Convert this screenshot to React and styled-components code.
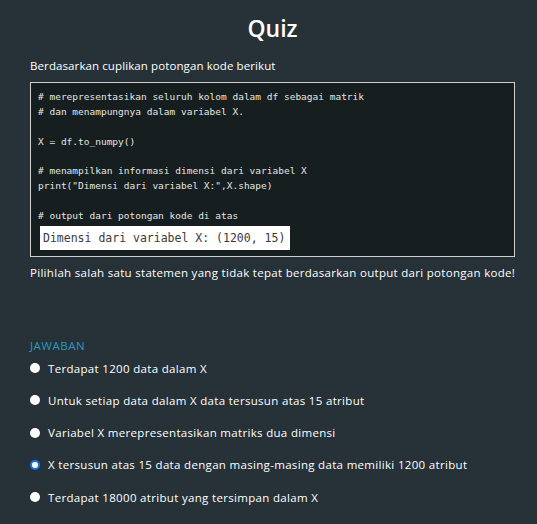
import React from "react";
import styled, { createGlobalStyle } from "styled-components";

const Global = createGlobalStyle`
  html, body { margin: 0; padding: 0; background: #263238; }
  body { font-family: "Open Sans", "Noto Sans", sans-serif; color: #ffffff; }
`;

const Page = styled.div`
  width: 537px;
  height: 524px;
  box-sizing: border-box;
  padding: 0 22px 0 30px;
  background: #263238;
  overflow: hidden;
`;

const Title = styled.h1`
  margin: 0;
  padding-top: 12px;
  height: 32px;
  line-height: 32px;
  text-align: center;
  font-size: 23px;
  font-weight: 600;
  color: #ffffff;
`;

const Text = styled.p`
  margin: ${(p) => p.$m || "0"};
  font-size: 11.5px;
  line-height: 16px;
  color: #ffffff;
  letter-spacing: ${(p) => p.$ls || "0.2px"};
  white-space: nowrap;
`;

const CodeBox = styled.div`
  margin-top: 8px;
  border: 1px solid #cfcfcf;
  background: #161e1f;
  padding: 7px 8px 7px 7px;
  height: 175px;
  box-sizing: border-box;
`;

const CodeLine = styled.div`
  font-family: "DejaVu Sans Mono", "Liberation Mono", monospace;
  font-size: 9.5px;
  line-height: 14.9px;
  height: 14.9px;
  color: #e4e6e4;
  white-space: pre;
`;

const Output = styled.div`
  margin-top: 2px;
  margin-left: 2px;
  width: 250px;
  height: 24px;
  box-sizing: border-box;
  background: #ffffff;
  padding-left: 3px;
  font-family: "DejaVu Sans Mono", "Liberation Mono", monospace;
  font-size: 11.5px;
  line-height: 24px;
  color: #3a3a3a;
  white-space: pre;
`;

const Label = styled.div`
  margin-top: 57px;
  font-size: 11.5px;
  line-height: 16px;
  color: #2b98bf;
  letter-spacing: 0.5px;
`;

const Options = styled.div`
  display: flex;
  flex-direction: column;
  margin-top: 6px;
  gap: 16.3px;
`;

const Option = styled.label`
  display: flex;
  align-items: center;
  gap: 8px;
  height: 16px;
  font-size: 11.5px;
  color: #ffffff;
  letter-spacing: 0.32px;
  white-space: nowrap;
`;

const Radio = styled.span`
  width: 10px;
  height: 10px;
  border-radius: 50%;
  box-sizing: border-box;
  background: #ffffff;
  border: ${(p) => (p.$checked ? "2.5px solid #1a73e8" : "none")};
  flex-shrink: 0;
`;

const code = [
  "# merepresentasikan seluruh kolom dalam df sebagai matrik",
  "# dan menampungnya dalam variabel X.",
  "",
  "X = df.to_numpy()",
  "",
  "# menampilkan informasi dimensi dari variabel X",
  'print("Dimensi dari variabel X:",X.shape)',
  "",
  "# output dari potongan kode di atas",
];

const options = [
  "Terdapat 1200 data dalam X",
  "Untuk setiap data dalam X data tersusun atas 15 atribut",
  "Variabel X merepresentasikan matriks dua dimensi",
  "X tersusun atas 15 data dengan masing-masing data memiliki 1200 atribut",
  "Terdapat 18000 atribut yang tersimpan dalam X",
];

export default function App() {
  return (
    <Page>
      <Global />
      <Title>Quiz</Title>
      <Text $m="14px 0 0 0" $ls="0.1px">Berdasarkan cuplikan potongan kode berikut</Text>
      <CodeBox>
        {code.map((l, i) => (
          <CodeLine key={i}>{l}</CodeLine>
        ))}
        <Output>Dimensi dari variabel X: (1200, 15)</Output>
      </CodeBox>
      <Text $m="8px 0 0 0" $ls="0.3px">
        Pilihlah salah satu statemen yang tidak tepat berdasarkan output dari potongan kode!
      </Text>
      <Label>JAWABAN</Label>
      <Options>
        {options.map((o, i) => (
          <Option key={i}>
            <Radio $checked={i === 3} />
            {o}
          </Option>
        ))}
      </Options>
    </Page>
  );
}
